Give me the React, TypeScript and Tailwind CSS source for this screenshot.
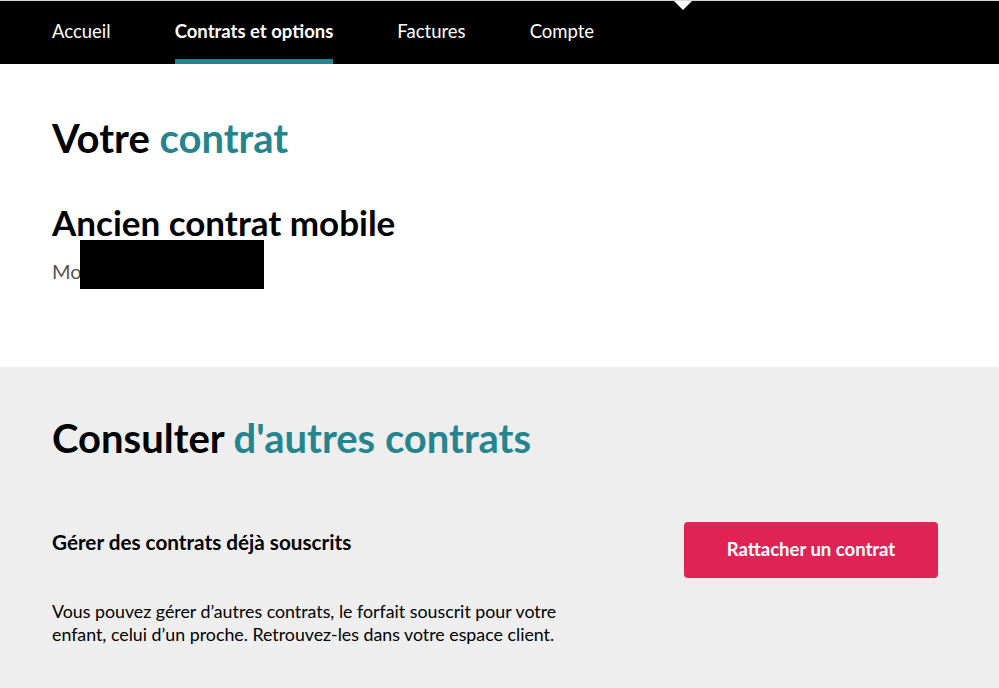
import { ReactNode } from 'react';

const tabs = [
  { label: 'Accueil', active: false },
  { label: 'Contrats et options', active: true },
  { label: 'Factures', active: false },
  { label: 'Compte', active: false },
];

function Heading({ dark, teal, className }: { dark: string; teal: string; className: string }) {
  return (
    <h2 className={`font-bold text-black ${className}`}>
      {dark} <span className="text-[#24858f]">{teal}</span>
    </h2>
  );
}

function Section({ children, className }: { children: ReactNode; className: string }) {
  return <section className={`px-[52px] ${className}`}>{children}</section>;
}

export default function App() {
  return (
    <div className="w-[999px] h-[688px] overflow-hidden bg-white font-['Lato',sans-serif]">
      {/* Top navigation */}
      <nav className="relative h-[64px] bg-black border-t border-[#d9d9d9] flex px-[52px] gap-[64px]">
        {tabs.map(tab => (
          <div
            key={tab.label}
            className={`h-full flex items-center pt-[3px] text-[18.5px] text-white border-b-[5px] ${tab.active ? 'font-bold border-[#24858f]' : 'border-transparent'}`}
          >
            {tab.label}
          </div>
        ))}
        <div className="absolute top-0 left-[674px] w-0 h-0 border-l-[9px] border-r-[9px] border-t-[9px] border-l-transparent border-r-transparent border-t-white" />
      </nav>

      {/* Current contract */}
      <Section className="h-[303px] pt-[50px]">
        <Heading dark="Votre" teal="contrat" className="text-[40px] leading-[48px]" />
        <h3 className="mt-[39px] text-[35px] leading-[42px] font-bold text-black">
          Ancien contrat mobile
        </h3>
        <div className="relative mt-[16px] text-[20px] text-[#555] leading-[24px]">
          Mo
          <div className="absolute left-[28px] -top-[19px] w-[184px] h-[49px] bg-black" />
        </div>
      </Section>

      {/* Other contracts */}
      <Section className="bg-[#eeeeee] h-[321px] pt-[47px]">
        <Heading dark="Consulter" teal="d'autres contrats" className="text-[40px] leading-[48px]" />
        <div className="mt-[60px] flex justify-between items-start pr-[9px]">
          <div className="pt-[7px]">
            <h4 className="text-[20.7px] font-bold text-black leading-[26px]">Gérer des contrats déjà souscrits</h4>
            <p className="mt-[45px] text-[17.8px] leading-[23px] text-black w-[540px]">
              Vous pouvez gérer d’autres contrats, le forfait souscrit pour votre enfant, celui d’un proche. Retrouvez-les dans votre espace client.
            </p>
          </div>
          <button className="w-[254px] h-[56px] rounded-[4px] bg-[#df2455] text-white font-bold text-[18.5px]">
            Rattacher un contrat
          </button>
        </div>
      </Section>
    </div>
  );
}
